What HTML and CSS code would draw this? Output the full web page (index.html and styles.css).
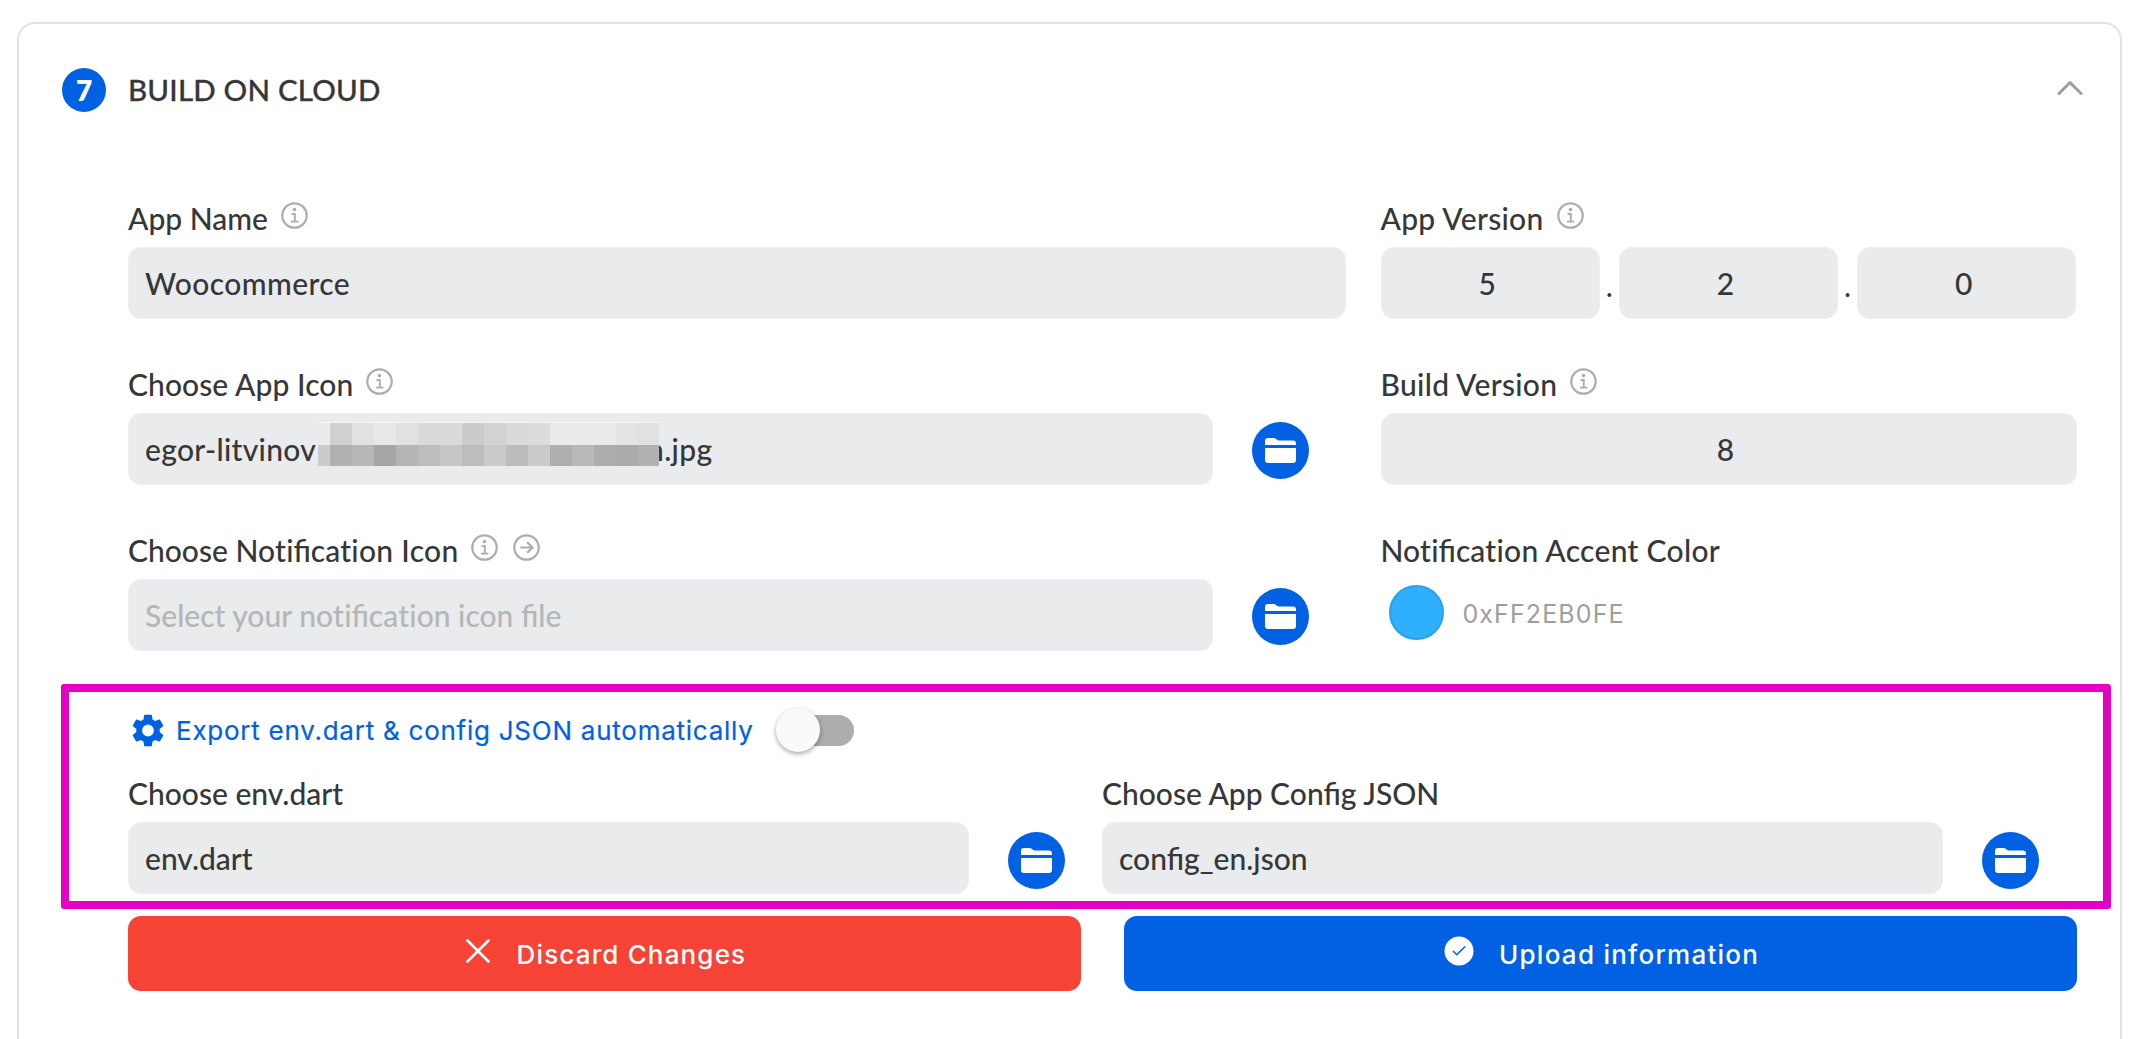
FILE: index.html
```html
<!DOCTYPE html>
<html lang="en">
<head>
<meta charset="utf-8">
<title>Build on cloud</title>
<link rel="stylesheet" href="styles.css">
</head>
<body>
<svg width="0" height="0" class="defs">
  <symbol id="info" viewBox="0 0 27 27"><circle cx="13.5" cy="13.5" r="12.2" fill="none" stroke="currentColor" stroke-width="2.2"/><circle cx="13.5" cy="7.6" r="1.8" fill="currentColor"/><path d="M10.6 12h3.2v7.6M10 19.6h7.4" fill="none" stroke="currentColor" stroke-width="1.9"/></symbol>
  <symbol id="go" viewBox="0 0 27 27"><circle cx="13.5" cy="13.5" r="12.2" fill="none" stroke="currentColor" stroke-width="2.2"/><path d="M7.2 13.5h12M14.2 8.2l5.3 5.3-5.3 5.3" fill="none" stroke="currentColor" stroke-width="2.2"/></symbol>
  <symbol id="folder" viewBox="0 0 31 25"><path d="M0 7V3Q0 0 3 0h5.5q1.500 0 2.600 1t2.600 1.500H28q3 0 3 3V7zM0 10h31v12q0 3-3 3H3q-3 0-3-3z" fill="currentColor"/></symbol>
</svg>
<main class="card">
  <header class="head">
    <span class="step">7</span>
    <h1 class="title">BUILD ON CLOUD</h1>
    <svg class="chevron" width="26" height="16" viewBox="0 0 26 16"><path d="M2 13.500L13 2.500l11 11" fill="none" stroke="#9e9e9e" stroke-width="3" stroke-linecap="round" stroke-linejoin="round"/></svg>
  </header>
  <section class="grid">
    <div class="field">
      <div class="label">App Name<svg class="hint"><use href="#info"/></svg></div>
      <div class="input wide">Woocommerce</div>
    </div>
    <div class="field">
      <div class="label"><span class="loose">App Version</span><svg class="hint"><use href="#info"/></svg></div>
      <div class="version"><div class="input num">5</div><span class="dot">.</span><div class="input num">2</div><span class="dot">.</span><div class="input num">0</div></div>
    </div>
    <div class="field">
      <div class="label"><span class="slight">Choose App Icon</span><svg class="hint"><use href="#info"/></svg></div>
      <div class="pick"><div class="input file"><span class="start">egor-litvinov</span><span class="tail">n.jpg</span>
        <svg class="mosaic" width="341" height="44" viewBox="0 0 341 44" shape-rendering="crispEdges">
          <path d="M0 0h341v1H0z" fill="#f6f6f7"/><path d="M0 1h12v22H0z" fill="#eaebed"/>
          <path d="M12 1h22v22H12z" fill="#cfd0d1"/><path d="M34 1h22v22H34z" fill="#e0e1e2"/><path d="M56 1h22v22H56z" fill="#e7e8e9"/><path d="M78 1h22v22H78z" fill="#e0e1e2"/><path d="M100 1h44v22h-44z" fill="#d9dadb"/><path d="M144 1h22v22h-22z" fill="#cacbcc"/><path d="M166 1h22v22h-22z" fill="#d1d2d3"/><path d="M188 1h22v22h-22z" fill="#d9dadb"/><path d="M210 1h22v22h-22z" fill="#dbdcdd"/><path d="M232 1h66v22h-66z" fill="#e9eaeb"/><path d="M298 1h22v22h-22z" fill="#e2e3e4"/><path d="M320 1h21v22h-21z" fill="#e0e1e2"/>
          <path d="M0 23h12v21H0z" fill="#cacbcc"/><path d="M12 23h22v21H12z" fill="#afb0b1"/><path d="M34 23h22v21H34z" fill="#b6b7b8"/><path d="M56 23h22v21H56z" fill="#a5a6a7"/><path d="M78 23h22v21H78z" fill="#b4b5b6"/><path d="M100 23h22v21h-22z" fill="#bcbdbe"/><path d="M122 23h22v21h-22z" fill="#c6c7c8"/><path d="M144 23h22v21h-22z" fill="#bcbdbe"/><path d="M166 23h22v21h-22z" fill="#c9cacb"/><path d="M188 23h22v21h-22z" fill="#bbbcbd"/><path d="M210 23h22v21h-22z" fill="#c9cacb"/><path d="M232 23h22v21h-22z" fill="#aeafb0"/><path d="M254 23h22v21h-22z" fill="#b8b9ba"/><path d="M276 23h22v21h-22z" fill="#acadae"/><path d="M298 23h22v21h-22z" fill="#aaabac"/><path d="M320 23h21v21h-21z" fill="#b0b1b2"/>
        </svg></div><span class="browse"><svg width="31" height="25"><use href="#folder"/></svg></span></div>
    </div>
    <div class="field">
      <div class="label"><span class="loose">Build Version</span><svg class="hint"><use href="#info"/></svg></div>
      <div class="input num">8</div>
    </div>
    <div class="field">
      <div class="label"><span class="longlabel">Choose No<span class="nolig">t</span>ifica<span class="nolig">tion Icon</span></span><svg class="hint"><use href="#info"/></svg><svg class="hint next"><use href="#go"/></svg></div>
      <div class="pick"><div class="input empty">Select your no<span class="nolig">t</span>ifica<span class="nolig">t</span>ion icon file</div><span class="browse"><svg width="31" height="25"><use href="#folder"/></svg></span></div>
    </div>
    <div class="field">
      <div class="label"><span>No<span class="nolig">t</span>ifica<span class="nolig">tion Accent Color</span></span></div>
      <div class="accent"><span class="swatch"></span><span class="hex">0xFF2EB0FE</span></div>
    </div>
  </section>
  <section class="export">
    <div class="auto">
      <svg class="gear" width="32" height="33" viewBox="2.200 2 19.600 20" preserveAspectRatio="none"><path fill="#0061e3" d="M19.140 12.940c.04-.3.060-.61.060-.94s-.020-.64-.070-.94l2.030-1.580a.49.49 0 0 0 .12-.61l-1.920-3.320a.488.488 0 0 0-.59-.22l-2.390.96c-.5-.38-1.030-.7-1.620-.94L14.400 2.810a.484.484 0 0 0-.48-.41h-3.840c-.24 0-.43.17-.47.41L9.250 5.350c-.59.24-1.130.57-1.620.94l-2.390-.96a.488.488 0 0 0-.59.22L2.740 8.870a.48.48 0 0 0 .12.61l2.030 1.580c-.05.3-.09.63-.09.94s.020.64.070.94l-2.030 1.580a.49.49 0 0 0-.12.61l1.920 3.320c.12.22.37.29.59.22l2.390-.96c.5.38 1.030.7 1.620.94l.36 2.540c.05.24.24.41.48.41h3.840c.24 0 .44-.17.47-.41l.36-2.540c.59-.24 1.130-.56 1.620-.94l2.390.96c.22.08.47 0 .59-.22l1.920-3.320a.48.48 0 0 0-.12-.61zM12 15.600A3.600 3.600 0 1 1 12 8.400a3.600 3.600 0 0 1 0 7.200z"/></svg>
      <span class="autotext">Export env.dart &amp; config JSON automatically</span>
      <span class="toggle"><span class="thumb"></span></span>
    </div>
    <div class="files">
      <div class="field">
        <div class="label">Choose env.dart</div>
        <div class="pick"><div class="input">env.dart</div><span class="browse"><svg width="31" height="25"><use href="#folder"/></svg></span></div>
      </div>
      <div class="field">
        <div class="label">Choose App Config JSON</div>
        <div class="pick"><div class="input">config_en.json</div><span class="browse"><svg width="31" height="25"><use href="#folder"/></svg></span></div>
      </div>
    </div>
  </section>
  <footer class="actions">
    <div class="btn discard"><svg width="24" height="24" viewBox="0 0 24 24"><path d="M1.500 1.500l21 21M22.500 1.500l-21 21" stroke="#fff" stroke-width="2.600" stroke-linecap="round"/></svg><span>Discard Changes</span></div>
    <div class="btn upload"><svg width="30" height="30" viewBox="0 0 30 30"><circle cx="15" cy="15" r="14.500" fill="#fff"/><path d="M9 15l3.800 3.800 8.400-8.300" fill="none" stroke="#0061e3" stroke-width="1.500"/></svg><span>Upload information</span></div>
  </footer>
</main>
</body>
</html>
```
FILE: styles.css
```css
* { box-sizing: border-box; }
body { margin: 0; background: #fff; overflow: hidden; font-family: Lato, sans-serif; font-size: 30px; color: #363738; }
.defs { position: absolute; }
svg { display: block; flex: none; }
.card { width: 2105px; height: 1017px; margin: 22px 0 0 17px; border: 2px solid #e3e3e3; border-bottom: 0; border-radius: 18px 18px 0 0; padding: 44px 42px 0 43px; }
.head { display: flex; align-items: center; height: 44px; }
.step { width: 44px; height: 44px; border-radius: 50%; background: #0061e3; color: #fff; font-weight: 800; font-size: 28px; line-height: 45px; text-align: center; }
.title { margin: 0 0 0 22px; font-size: 29.500px; font-weight: 500; line-height: 44px; letter-spacing: .2px; -webkit-text-stroke: .3px currentColor; }
.chevron { margin-left: auto; margin-right: -5px; margin-top: -5px; }
.grid { display: grid; grid-template-columns: 1217.500px 696px; column-gap: 35px; row-gap: 44px; margin: 85px 0 0 66px; }
.field { display: flex; flex-direction: column; }
.label { display: flex; height: 50px; line-height: 43px; white-space: nowrap; font-weight: 500; }
.loose { letter-spacing: .3px; }
.slight { letter-spacing: .08px; }
.longlabel { width: 330px; }
.nolig { font-variant-ligatures: none; letter-spacing: .3px; }
.hint { width: 27px; height: 27px; margin: 5px 0 0 13px; color: #adadad; }
.next { margin-left: 15px; }
.input { flex: 1 0 auto; height: 72px; line-height: 71px; border-radius: 13px; background: #eaebed; padding: 0 16px; font-weight: 500; white-space: nowrap; border: 1px solid #eeeff0; }
.wide { letter-spacing: .4px; }
.num { text-align: center; padding-right: 22px; }
.version { display: flex; height: 72px; }
.version .num { flex: 1 1 0; }
.dot { width: 19px; text-align: center; line-height: 77px; }
.pick { display: flex; gap: 39.500px; width: 1181px; height: 72px; }
.browse { display: flex; align-items: center; justify-content: center; flex: none; width: 57px; height: 57px; margin-top: 9px; border-radius: 50%; background: #0061e3; color: #fff; }
.file { position: relative; display: flex; }
.mosaic { position: absolute; left: 189px; top: 8px; }
.start { width: 173px; letter-spacing: .3px; }
.tail { margin-left: 329px; letter-spacing: .35px; }
.empty { color: #b4b6b8; }
.accent { display: flex; align-items: center; height: 72px; padding-left: 8px; }
.swatch { width: 55px; height: 55px; margin-top: -5px; border-radius: 50%; background: #2eb0fe; border: 2px solid #2aa1e8; }
.hex { margin: -2px 0 0 19px; font-family: Inter, sans-serif; font-size: 25px; letter-spacing: 1.100px; color: #9e9e9e; }
.export { width: 2050px; height: 225px; margin: 33px 0 0 -1px; border: 8px solid #e600c4; border-radius: 3px; padding: 15px 0 0 59px; }
.auto { display: flex; align-items: center; height: 46px; padding-left: 4px; }
.autotext { flex: none; width: 597px; margin-left: 12px; margin-top: 1px; font-family: Inter, sans-serif; font-size: 26px; letter-spacing: .750px; color: #0061e3; white-space: nowrap; -webkit-text-stroke: .2px currentColor; }
.toggle { position: relative; flex: none; width: 70px; height: 31px; border-radius: 16px; background: #adadad; margin-left: 11px; }
.thumb { position: absolute; left: -8px; top: -7px; width: 44px; height: 44px; border-radius: 50%; background: #fafafa; box-shadow: 0 2px 5px rgba(0,0,0,.35); }
.files { display: flex; gap: 37px; margin-top: 19px; }
.files .pick { gap: 39px; width: 937px; }
.files .browse { margin-top: 9.500px; }
.actions { display: grid; grid-template-columns: 1fr 1fr; gap: 43px; width: 1948.500px; margin: 7px 0 0 66px; }
.btn { display: flex; align-items: center; justify-content: center; height: 75px; border-radius: 13px; color: #fff; font-family: Inter, sans-serif; font-size: 26px; font-weight: 500; letter-spacing: 1.250px; white-space: nowrap; padding-left: 3px; }
.btn span { margin-top: 1px; }
.btn svg { margin-top: -5px; margin-right: 25px; }
.discard { background: #f54336; letter-spacing: 1.150px; }
.discard svg { margin-right: 27px; }
.upload { background: #0061e3; }
```
